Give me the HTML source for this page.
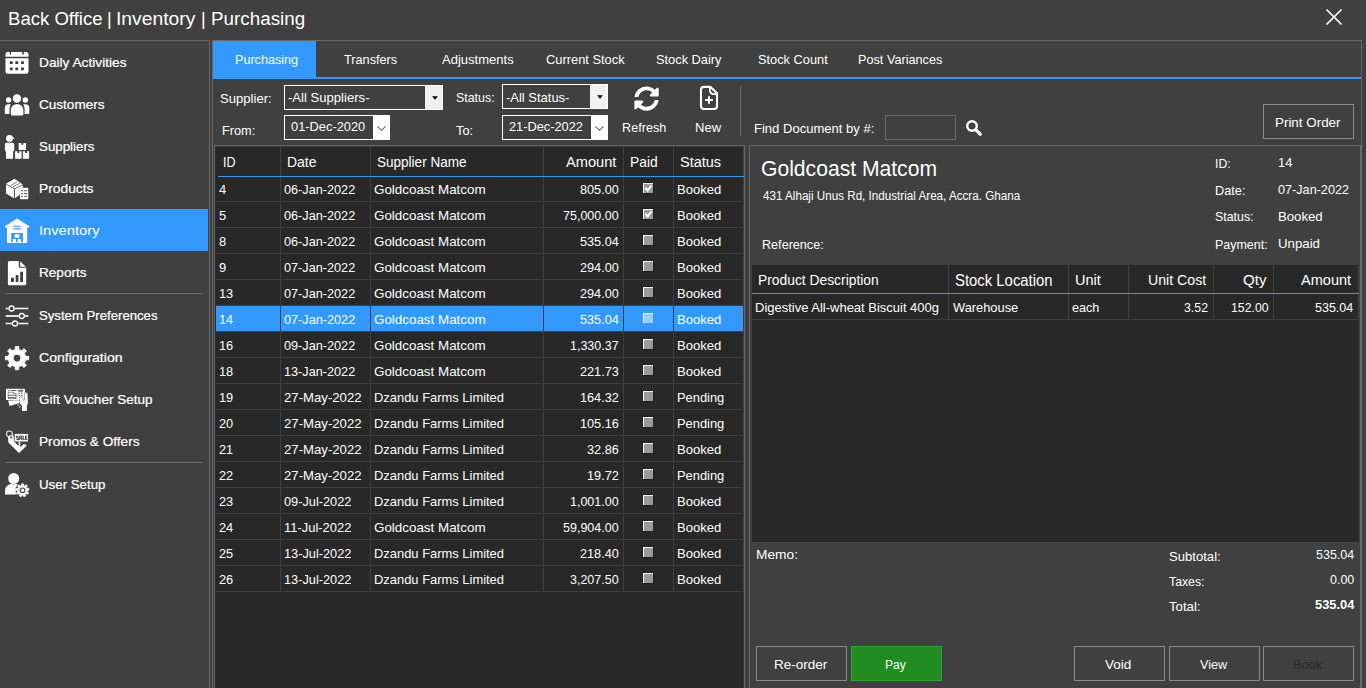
<!DOCTYPE html><html><head><meta charset="utf-8"><title>Back Office</title><style>
html,body{margin:0;padding:0;}
body{width:1366px;height:688px;overflow:hidden;background:#404040;position:relative;font-family:"Liberation Sans",sans-serif;}
.b{position:absolute;}
.t{position:absolute;white-space:pre;line-height:1;transform-origin:0 0;}
svg{position:absolute;overflow:visible;}
</style></head><body>
<svg style="left:1325px;top:8px" width="18" height="18" viewBox="0 0 18 18"><path d="M1.5 1.5 L16.5 16.5 M16.5 1.5 L1.5 16.5" stroke="#fff" stroke-width="1.75" fill="none"/></svg>
<div class="b" style="left:0px;top:40px;width:210px;height:1px;background:#686868;"></div>
<div class="b" style="left:209px;top:40px;width:1px;height:648px;background:#686868;"></div>
<div class="b" style="left:0px;top:209px;width:208px;height:42px;background:#3399ff;"></div>
<div class="b" style="left:5px;top:293px;width:198px;height:1px;background:#6e6e6e;"></div>
<div class="b" style="left:5px;top:462px;width:198px;height:1px;background:#6e6e6e;"></div>
<div class="b" style="left:212px;top:40px;width:1150px;height:1px;background:#686868;"></div>
<div class="b" style="left:212px;top:40px;width:1px;height:648px;background:#686868;"></div>
<div class="b" style="left:1361px;top:40px;width:1px;height:648px;background:#686868;"></div>
<div class="b" style="left:213px;top:41px;width:103px;height:38px;background:#3399ff;"></div>
<div class="b" style="left:213px;top:77px;width:1148px;height:2px;background:#3399ff;"></div>
<div class="b" style="left:284px;top:85px;width:159px;height:25px;border:1px solid #fff;box-sizing:border-box;"></div>
<div class="b" style="left:425px;top:86px;width:17px;height:23px;background:#f0f0f0;"></div>
<svg style="left:431.6px;top:95.8px" width="6" height="4" viewBox="0 0 6 4"><path d="M0.1 0.2 L5.9 0.2 L3 3.7 Z" fill="#000"/></svg>
<div class="b" style="left:502px;top:84px;width:106px;height:25px;border:1px solid #fff;box-sizing:border-box;"></div>
<div class="b" style="left:590px;top:85px;width:17px;height:23px;background:#f0f0f0;"></div>
<svg style="left:596.6px;top:94.8px" width="6" height="4" viewBox="0 0 6 4"><path d="M0.1 0.2 L5.9 0.2 L3 3.7 Z" fill="#000"/></svg>
<div class="b" style="left:284px;top:115px;width:106px;height:25px;border:1px solid #fff;box-sizing:border-box;"></div>
<div class="b" style="left:373px;top:116px;width:16px;height:23px;background:#fff;"></div>
<svg style="left:377.0px;top:125.5px" width="9" height="5" viewBox="0 0 9 5"><path d="M0.4 0.4 L4.5 4.3 L8.6 0.4" stroke="#5c5c5c" stroke-width="1.1" fill="none"/></svg>
<div class="b" style="left:502px;top:115px;width:106px;height:25px;border:1px solid #fff;box-sizing:border-box;"></div>
<div class="b" style="left:591px;top:116px;width:16px;height:23px;background:#fff;"></div>
<svg style="left:595.0px;top:125.5px" width="9" height="5" viewBox="0 0 9 5"><path d="M0.4 0.4 L4.5 4.3 L8.6 0.4" stroke="#5c5c5c" stroke-width="1.1" fill="none"/></svg>
<div class="b" style="left:740px;top:86px;width:1px;height:50px;background:#6a6a6a;"></div>
<div class="b" style="left:885px;top:115px;width:71px;height:25px;border:1px solid #6a6a6a;box-sizing:border-box;"></div>
<div class="b" style="left:1263px;top:104px;width:91px;height:35px;border:1px solid #8a8a8a;box-sizing:border-box;"></div>
<div class="b" style="left:214px;top:145px;width:531px;height:560px;background:#282828;border:1px solid #686868;box-sizing:border-box;"></div>
<div class="b" style="left:215px;top:146px;width:529px;height:1px;background:#363636;"></div>
<div class="b" style="left:743px;top:146px;width:1px;height:542px;background:#363636;"></div>
<div class="b" style="left:216px;top:201px;width:528px;height:1px;background:#404040;"></div>
<div class="b" style="left:216px;top:227px;width:528px;height:1px;background:#404040;"></div>
<div class="b" style="left:216px;top:253px;width:528px;height:1px;background:#404040;"></div>
<div class="b" style="left:216px;top:279px;width:528px;height:1px;background:#404040;"></div>
<div class="b" style="left:216px;top:305px;width:528px;height:1px;background:#404040;"></div>
<div class="b" style="left:216px;top:331px;width:528px;height:1px;background:#404040;"></div>
<div class="b" style="left:216px;top:357px;width:528px;height:1px;background:#404040;"></div>
<div class="b" style="left:216px;top:383px;width:528px;height:1px;background:#404040;"></div>
<div class="b" style="left:216px;top:409px;width:528px;height:1px;background:#404040;"></div>
<div class="b" style="left:216px;top:435px;width:528px;height:1px;background:#404040;"></div>
<div class="b" style="left:216px;top:461px;width:528px;height:1px;background:#404040;"></div>
<div class="b" style="left:216px;top:487px;width:528px;height:1px;background:#404040;"></div>
<div class="b" style="left:216px;top:513px;width:528px;height:1px;background:#404040;"></div>
<div class="b" style="left:216px;top:539px;width:528px;height:1px;background:#404040;"></div>
<div class="b" style="left:216px;top:565px;width:528px;height:1px;background:#404040;"></div>
<div class="b" style="left:216px;top:591px;width:528px;height:1px;background:#404040;"></div>
<div class="b" style="left:216px;top:306px;width:528px;height:25px;background:#3399ff;"></div>
<div class="b" style="left:280px;top:146px;width:1px;height:446px;background:#404040;"></div>
<div class="b" style="left:370px;top:146px;width:1px;height:446px;background:#404040;"></div>
<div class="b" style="left:543px;top:146px;width:1px;height:446px;background:#404040;"></div>
<div class="b" style="left:623px;top:146px;width:1px;height:446px;background:#404040;"></div>
<div class="b" style="left:673px;top:146px;width:1px;height:446px;background:#404040;"></div>
<div class="b" style="left:743px;top:146px;width:1px;height:446px;background:#404040;"></div>
<div class="b" style="left:218px;top:176px;width:526px;height:1px;background:#3399ff;"></div>
<div class="b" style="left:643px;top:183px;width:10px;height:10px;background:#9a9a9a;box-sizing:border-box;border-top:1px solid #fff;border-left:1px solid #fff;box-shadow:0 0 0 1px #1f1f1f;"></div>
<svg style="left:643px;top:183px" width="10" height="10" viewBox="0 0 10 10"><path d="M2.4 4.6 L4.6 7.6 L8.6 2.2" stroke="#fff" stroke-width="1.9" fill="none"/></svg>
<div class="b" style="left:643px;top:209px;width:10px;height:10px;background:#9a9a9a;box-sizing:border-box;border-top:1px solid #fff;border-left:1px solid #fff;box-shadow:0 0 0 1px #1f1f1f;"></div>
<svg style="left:643px;top:209px" width="10" height="10" viewBox="0 0 10 10"><path d="M2.4 4.6 L4.6 7.6 L8.6 2.2" stroke="#fff" stroke-width="1.9" fill="none"/></svg>
<div class="b" style="left:643px;top:235px;width:10px;height:10px;background:#9a9a9a;box-sizing:border-box;border-top:1px solid #fff;border-left:1px solid #fff;box-shadow:0 0 0 1px #1f1f1f;"></div>
<div class="b" style="left:643px;top:261px;width:10px;height:10px;background:#9a9a9a;box-sizing:border-box;border-top:1px solid #fff;border-left:1px solid #fff;box-shadow:0 0 0 1px #1f1f1f;"></div>
<div class="b" style="left:643px;top:287px;width:10px;height:10px;background:#9a9a9a;box-sizing:border-box;border-top:1px solid #fff;border-left:1px solid #fff;box-shadow:0 0 0 1px #1f1f1f;"></div>
<div class="b" style="left:643px;top:313px;width:10px;height:10px;background:#9ccdff;box-sizing:border-box;border-top:1px solid #fff;border-left:1px solid #fff;box-shadow:0 0 0 1px #3399ff;"></div>
<div class="b" style="left:643px;top:339px;width:10px;height:10px;background:#9a9a9a;box-sizing:border-box;border-top:1px solid #fff;border-left:1px solid #fff;box-shadow:0 0 0 1px #1f1f1f;"></div>
<div class="b" style="left:643px;top:365px;width:10px;height:10px;background:#9a9a9a;box-sizing:border-box;border-top:1px solid #fff;border-left:1px solid #fff;box-shadow:0 0 0 1px #1f1f1f;"></div>
<div class="b" style="left:643px;top:391px;width:10px;height:10px;background:#9a9a9a;box-sizing:border-box;border-top:1px solid #fff;border-left:1px solid #fff;box-shadow:0 0 0 1px #1f1f1f;"></div>
<div class="b" style="left:643px;top:417px;width:10px;height:10px;background:#9a9a9a;box-sizing:border-box;border-top:1px solid #fff;border-left:1px solid #fff;box-shadow:0 0 0 1px #1f1f1f;"></div>
<div class="b" style="left:643px;top:443px;width:10px;height:10px;background:#9a9a9a;box-sizing:border-box;border-top:1px solid #fff;border-left:1px solid #fff;box-shadow:0 0 0 1px #1f1f1f;"></div>
<div class="b" style="left:643px;top:469px;width:10px;height:10px;background:#9a9a9a;box-sizing:border-box;border-top:1px solid #fff;border-left:1px solid #fff;box-shadow:0 0 0 1px #1f1f1f;"></div>
<div class="b" style="left:643px;top:495px;width:10px;height:10px;background:#9a9a9a;box-sizing:border-box;border-top:1px solid #fff;border-left:1px solid #fff;box-shadow:0 0 0 1px #1f1f1f;"></div>
<div class="b" style="left:643px;top:521px;width:10px;height:10px;background:#9a9a9a;box-sizing:border-box;border-top:1px solid #fff;border-left:1px solid #fff;box-shadow:0 0 0 1px #1f1f1f;"></div>
<div class="b" style="left:643px;top:547px;width:10px;height:10px;background:#9a9a9a;box-sizing:border-box;border-top:1px solid #fff;border-left:1px solid #fff;box-shadow:0 0 0 1px #1f1f1f;"></div>
<div class="b" style="left:643px;top:573px;width:10px;height:10px;background:#9a9a9a;box-sizing:border-box;border-top:1px solid #fff;border-left:1px solid #fff;box-shadow:0 0 0 1px #1f1f1f;"></div>
<div class="b" style="left:749px;top:145px;width:612px;height:560px;border:1px solid #686868;box-sizing:border-box;"></div>
<div class="b" style="left:752px;top:265px;width:607px;height:277px;background:#282828;"></div>
<div class="b" style="left:948px;top:265px;width:1px;height:55px;background:#404040;"></div>
<div class="b" style="left:1068px;top:265px;width:1px;height:55px;background:#404040;"></div>
<div class="b" style="left:1128px;top:265px;width:1px;height:55px;background:#404040;"></div>
<div class="b" style="left:1213px;top:265px;width:1px;height:55px;background:#404040;"></div>
<div class="b" style="left:1273px;top:265px;width:1px;height:55px;background:#404040;"></div>
<div class="b" style="left:1358px;top:265px;width:1px;height:55px;background:#404040;"></div>
<div class="b" style="left:752px;top:319px;width:607px;height:1px;background:#404040;"></div>
<div class="b" style="left:752px;top:293px;width:607px;height:1px;background:#3399ff;"></div>
<div class="b" style="left:756px;top:646px;width:91px;height:35px;border:1px solid #8a8a8a;box-sizing:border-box;"></div>
<div class="b" style="left:851px;top:646px;width:91px;height:35px;background:#228b22;border:1px solid #2fa52f;box-sizing:border-box;"></div>
<div class="b" style="left:1074px;top:646px;width:91px;height:35px;border:1px solid #8a8a8a;box-sizing:border-box;"></div>
<div class="b" style="left:1169px;top:646px;width:91px;height:35px;border:1px solid #8a8a8a;box-sizing:border-box;"></div>
<div class="b" style="left:1263px;top:646px;width:91px;height:35px;border:1px solid #8a8a8a;box-sizing:border-box;"></div>
<svg style="left:633.85px;top:85.75px" width="25.1" height="25.1" viewBox="0 0 512 512"><path fill="#fff" d="M370.72 133.28C339.458 104.008 298.888 87.962 255.848 88c-77.458.068-144.328 53.178-162.791 126.85-1.344 5.363-6.122 9.15-11.651 9.15H24.103c-7.498 0-13.194-6.807-11.807-14.176C33.933 94.924 134.813 8 256 8c66.448 0 126.791 26.136 171.315 68.685L463.03 40.97C478.149 25.851 504 36.559 504 57.941V192c0 13.255-10.745 24-24 24H345.941c-21.382 0-32.09-25.851-16.971-40.971l41.75-41.749zM32 296h134.059c21.382 0 32.09 25.851 16.971 40.971l-41.75 41.75c31.262 29.273 71.835 45.319 114.876 45.28 77.418-.07 144.315-53.144 162.787-126.849 1.344-5.363 6.122-9.15 11.651-9.15h57.304c7.498 0 13.194 6.807 11.807 14.176C478.067 417.076 377.187 504 256 504c-66.448 0-126.791-26.136-171.315-68.685L48.97 471.03C33.851 486.149 8 475.441 8 454.059V320c0-13.255 10.745-24 24-24z"/></svg>
<svg style="left:0;top:0" width="1366" height="688" viewBox="0 0 1366 688"><path fill="#fff" d="M8 52h1.7v2.6h1.3V52h11.2v2.6h1.6V52H26a2.5 2.5 0 0 1 2.5 2.5v2.2h-23v-2.2A2.5 2.5 0 0 1 8 52z"/><path fill="#fff" fill-rule="evenodd" d="M5.5 58.3h23v12.9a2.5 2.5 0 0 1-2.5 2.5H8a2.5 2.5 0 0 1-2.5-2.5zM9.8 61.2h2.9v2.9H9.8z M15.3 61.2h2.9v2.9h-2.9z M21 61.2h2.9v2.9H21z M9.8 67.4h2.9v2.9H9.8z M15.3 67.4h2.9v2.9h-2.9z M21 67.4h2.9v2.9H21z"/><circle cx="17" cy="98.5" r="4.2" fill="#fff"/><circle cx="8.6" cy="100" r="2.7" fill="#fff"/><circle cx="25.3" cy="100" r="2.7" fill="#fff"/><path fill="#fff" d="M10.8 110a6.2 6 0 0 1 12.6 0v4a1.5 1.5 0 0 1-1.5 1.5h-9.6a1.5 1.5 0 0 1-1.5-1.5z"/><path fill="#fff" d="M4.8 108a3.8 3.8 0 0 1 3.8-3.8h2.3a7 7 0 0 0-1.4 4.5v5.2H5.8a1 1 0 0 1-1-1z"/><path fill="#fff" d="M29.3 108a3.8 3.8 0 0 0-3.8-3.8h-2.3a7 7 0 0 1 1.4 4.5v5.2h3.7a1 1 0 0 0 1-1z"/><circle cx="9.5" cy="138.4" r="3.4" fill="#fff"/><path fill="#fff" d="M11.5 136.6l3.2 1.6-2.2 1z"/><path fill="#fff" d="M6.5 142.8h6.2a1.5 1.5 0 0 1 1.5 1.5v6.2a.8.8 0 0 1-.8.8h-.3v7.5H6v-7.5h-.3a.8.8 0 0 1-.8-.8v-6.2a1.5 1.5 0 0 1 1.6-1.5z"/><path fill="#fff" d="M18.6 143.1h2.7v1.7h2v-1.7h2.7v6.8h-7.4z M15.1 151.2h2.3v1.7h1.9v-1.7h2.3v7.6h-6.5z M22.9 151.2h2.2v1.7h1.9v-1.7h2.1v7.6h-6.2z"/><path fill="#fff" d="M14.6 178.8l-8.6 5 8.4 4.7 8.4-4z"/><path fill="#fff" d="M6 184.6l8 4.5v9.1l-8-4.7z"/><path fill="#fff" d="M14.9 189.1l7.9-3.9v3h-3v6.6l-4.9 3.4z"/><path stroke="#404040" stroke-width="0.7" fill="none" d="M10.5 185.9l6.8-4.2 M12.8 187.2l7.3-4.2"/><rect x="20" y="187.8" width="8.3" height="11.4" rx="0.8" fill="#fff"/><path stroke="#666" stroke-width="1.1" fill="none" d="M21 190.7h2 M24 190.7h3.3 M21 193.6h2 M24 193.6h3.3 M21 196.5h2 M24 196.5h3.3"/><path fill="#fff" d="M17 218.6l12.2 7.7v1.5l-2-.6v14.6a1.2 1.2 0 0 1-1.2 1.2H8.2A1.2 1.2 0 0 1 7 241.8v-14.6l-2 .6v-1.5z"/><path fill="#3399ff" d="M13.1 225.8h7.8v0.9h-7.8z"/><path fill="#7dbdff" d="M13.1 228.1h7.8v1.7h-7.8z"/><path fill="#3399ff" d="M11.2 233h11.8v9.2H11.2z"/><path fill="#fff" d="M14.7 234.2h4.7v3.5h-4.7z M12.8 239h3.2v3.3h-3.2z M17.7 239h3.4v3.3h-3.4z"/><path fill="#fff" d="M9.4 261h9.4v5.4a1.3 1.3 0 0 0 1.3 1.3h6.1v16a1.5 1.5 0 0 1-1.5 1.5H9.4a1.5 1.5 0 0 1-1.5-1.5v-21.2a1.5 1.5 0 0 1 1.5-1.5z"/><path fill="#fff" d="M20.1 261.3l5.8 5.4h-5.8z"/><path fill="#404040" d="M11 277.8h2.9v4.2H11z M15.7 274.9h2.7v7.1h-2.7z M20.2 271.7h2.8v10.3h-2.8z"/><path stroke="#fff" stroke-width="1.3" fill="none" d="M5.8 308.5h2.8 M14.7 308.5h13.6 M5.8 323.5h6.2 M18.1 323.5h10.2"/><path stroke="#e4e4e4" stroke-width="1.9" fill="none" d="M5.8 316h12.9 M24.9 316h3.4"/><circle cx="11.6" cy="308.5" r="2.5" stroke="#fff" stroke-width="1.3" fill="none"/><circle cx="21.8" cy="316" r="2.5" stroke="#fff" stroke-width="1.3" fill="none"/><circle cx="15" cy="323.5" r="2.5" stroke="#fff" stroke-width="1.3" fill="none"/><path fill="#fff" stroke="#fff" stroke-width="0.8" stroke-linejoin="round" d="M13.79 349.91 L15.25 349.48 L15.27 346.43 L18.73 346.43 L18.75 349.48 L20.53 350.04 L21.86 350.76 L24.03 348.62 L26.48 351.07 L24.34 353.24 L25.19 354.89 L25.62 356.35 L28.67 356.37 L28.67 359.83 L25.62 359.85 L25.06 361.63 L24.34 362.96 L26.48 365.13 L24.03 367.58 L21.86 365.44 L20.21 366.29 L18.75 366.72 L18.73 369.77 L15.27 369.77 L15.25 366.72 L13.47 366.16 L12.14 365.44 L9.97 367.58 L7.52 365.13 L9.66 362.96 L8.81 361.31 L8.38 359.85 L5.33 359.83 L5.33 356.37 L8.38 356.35 L8.94 354.57 L9.66 353.24 L7.52 351.07 L9.97 348.62 L12.14 350.76Z"/><circle cx="17" cy="358.1" r="3.4" fill="#404040"/><path fill="#fff" d="M8.2 400.6l11.5-.4.5 2.6-10.6 3.3z"/><rect x="6" y="388.8" width="18.9" height="11.2" rx="0.6" fill="#fff"/><path stroke="#555" stroke-width="0.9" fill="none" d="M7.8 390.5h1.8 M11 390.5h5.6 M8.4 395.3h7.6 M8.4 397.6h7.6 M18.3 393.2h1.6 M20.6 393.2h2.2 M18.3 395.6h1.6 M20.9 395.6h1.9"/><path fill="#6a6a6a" d="M18.2 389.8h4.8v1.9h-4.8z"/><path stroke="#555" stroke-width="0.7" fill="none" d="M8.2 392.2h5.4v1.4h2.6v5h-8z"/><path fill="#fff" stroke="#404040" stroke-width="0.8" paint-order="stroke" d="M24.5 394.2q.2-1.6 1.5-1.6 1.4 0 1.5 1.5l.4 8.8-1 3v5h-4.9v-4.8l-2.3-3.2-.3-4.2q-.1-1.5 1-1.7 1-.1 1.6.9l1.7 2.7.9-.3z"/><path stroke="#fff" stroke-width="1" fill="none" d="M17.3 405.4l1.8-.9 M18.9 407.5l1.7-1.2"/><circle cx="9.4" cy="433.9" r="2.9" stroke="#e8e8e8" stroke-width="1.1" fill="none"/><path fill="#fff" d="M9.6 435.6l3.6-1.2 1.2 7.3 4.2 4.2v-4.1h1.7v5.7l3.7-3.7 2.8 1.6-7.8 7.6-10.6-10.5-.4-5z"/><circle cx="11.2" cy="437.4" r="1.1" fill="#404040"/><circle cx="11.2" cy="437.4" r="0.4" fill="#fff"/><rect x="14.7" y="433.9" width="13.3" height="7.6" fill="#fff" stroke="#404040" stroke-width="0.9" paint-order="stroke"/><path stroke="#2e2e2e" stroke-width="0.95" fill="none" d="M18.5 436.1h-2.1v1.7h2.1v1.8h-2.1 M19.7 440v-3.9h2.1v3.9 M19.7 438.2h2.1 M23.1 435.7v3.9h1.6 M27.4 436.1h-1.9v3.5h1.9 M25.5 437.85h1.5"/><circle cx="13.7" cy="478.5" r="5.5" fill="#fff"/><path fill="#fff" d="M5 494.5v-4a6.5 6.5 0 0 1 6.5-6.5h.6a7 7 0 0 0 3.4 0h1.3l.9.6-2.2 3.3.7 2.2-.7 2.2 1.3 2.2z"/><circle cx="22.5" cy="490.3" r="6.6" fill="#404040"/><path fill="#fff" stroke="#fff" stroke-width="0.8" stroke-linejoin="round" d="M20.97 485.86 L21.50 485.71 L21.48 483.88 L23.52 483.88 L23.50 485.71 L24.18 485.91 L24.69 486.14 L25.85 484.73 L27.41 486.04 L26.22 487.42 L26.61 488.02 L26.85 488.52 L28.65 488.18 L29.00 490.19 L27.20 490.48 L27.11 491.20 L26.98 491.73 L28.57 492.63 L27.55 494.39 L25.98 493.46 L25.46 493.95 L25.01 494.28 L25.65 495.99 L23.74 496.68 L23.13 494.96 L22.42 495.00 L21.87 494.96 L21.26 496.68 L19.35 495.99 L19.99 494.28 L19.42 493.85 L19.02 493.46 L17.45 494.39 L16.43 492.63 L18.02 491.73 L17.86 491.04 L17.80 490.48 L16.00 490.19 L16.35 488.18 L18.15 488.52 L18.47 487.88 L18.78 487.42 L17.59 486.04 L19.15 484.73 L20.31 486.14Z"/><circle cx="22.5" cy="490.3" r="2.9" fill="#404040"/><circle cx="22.5" cy="490.3" r="1.7" fill="#fff"/><path stroke="#fff" stroke-width="2.1" fill="none" stroke-linejoin="round" d="M704 86.9h6.6l6.4 6.4v12.7a3 3 0 0 1-3 3h-10a3 3 0 0 1-3-3V89.9a3 3 0 0 1 3-3z"/><path stroke="#fff" stroke-width="1.8" fill="none" d="M709.9 87.2v3.4a3.6 3.6 0 0 0 3.6 3.6h3.3"/><path stroke="#fff" stroke-width="2" fill="none" d="M705.2 100h7.7 M709 96.2v7.6"/><circle cx="972" cy="126" r="4.75" stroke="#fff" stroke-width="2.45" fill="none"/><path stroke="#fff" stroke-width="3.3" stroke-linecap="round" fill="none" d="M975.7 129.7l4.5 4.5"/></svg>
<span class="t" style="left:7.50px;top:9.76px;font-size:18px;color:#ffffff;transform:scaleX(1.0314);">Back Office</span>
<span class="t" style="left:106.90px;top:9.76px;font-size:18px;color:#ffffff;">|</span>
<span class="t" style="left:116.30px;top:9.76px;font-size:18px;color:#ffffff;transform:scaleX(1.0723);">Inventory</span>
<span class="t" style="left:201.10px;top:9.76px;font-size:18px;color:#ffffff;">|</span>
<span class="t" style="left:210.50px;top:9.76px;font-size:18px;color:#ffffff;transform:scaleX(1.0459);">Purchasing</span>
<span class="t" style="left:39.00px;top:56.00px;font-size:13px;color:#ffffff;-webkit-text-stroke:0.22px #ffffff;transform:scaleX(1.0532);">Daily Activities</span>
<span class="t" style="left:39.00px;top:98.00px;font-size:13px;color:#ffffff;-webkit-text-stroke:0.22px #ffffff;transform:scaleX(1.0420);">Customers</span>
<span class="t" style="left:39.00px;top:140.00px;font-size:13px;color:#ffffff;-webkit-text-stroke:0.22px #ffffff;transform:scaleX(1.0239);">Suppliers</span>
<span class="t" style="left:39.00px;top:182.00px;font-size:13px;color:#ffffff;-webkit-text-stroke:0.22px #ffffff;transform:scaleX(1.0621);">Products</span>
<span class="t" style="left:39.00px;top:224.00px;font-size:13px;color:#ffffff;transform:scaleX(1.1312);">Inventory</span>
<span class="t" style="left:39.00px;top:266.00px;font-size:13px;color:#ffffff;-webkit-text-stroke:0.22px #ffffff;transform:scaleX(1.0432);">Reports</span>
<span class="t" style="left:39.00px;top:309.00px;font-size:13px;color:#ffffff;-webkit-text-stroke:0.22px #ffffff;transform:scaleX(1.0124);">System Preferences</span>
<span class="t" style="left:39.00px;top:351.00px;font-size:13px;color:#ffffff;-webkit-text-stroke:0.22px #ffffff;transform:scaleX(1.0798);">Configuration</span>
<span class="t" style="left:39.00px;top:393.00px;font-size:13px;color:#ffffff;-webkit-text-stroke:0.22px #ffffff;transform:scaleX(1.0401);">Gift Voucher Setup</span>
<span class="t" style="left:39.00px;top:435.00px;font-size:13px;color:#ffffff;-webkit-text-stroke:0.22px #ffffff;transform:scaleX(1.0486);">Promos &amp; Offers</span>
<span class="t" style="left:39.00px;top:478.00px;font-size:13px;color:#ffffff;-webkit-text-stroke:0.22px #ffffff;transform:scaleX(1.0223);">User Setup</span>
<span class="t" style="left:235.00px;top:53.00px;font-size:13px;color:#ffffff;transform:scaleX(0.9685);">Purchasing</span>
<span class="t" style="left:343.80px;top:53.00px;font-size:13px;color:#ffffff;transform:scaleX(0.9775);">Transfers</span>
<span class="t" style="left:441.50px;top:53.00px;font-size:13px;color:#ffffff;transform:scaleX(1.0021);">Adjustments</span>
<span class="t" style="left:546.20px;top:53.00px;font-size:13px;color:#ffffff;transform:scaleX(0.9889);">Current Stock</span>
<span class="t" style="left:655.80px;top:53.00px;font-size:13px;color:#ffffff;transform:scaleX(0.9854);">Stock Dairy</span>
<span class="t" style="left:757.80px;top:53.00px;font-size:13px;color:#ffffff;transform:scaleX(0.9841);">Stock Count</span>
<span class="t" style="left:857.90px;top:53.00px;font-size:13px;color:#ffffff;transform:scaleX(0.9749);">Post Variances</span>
<span class="t" style="left:219.80px;top:92.00px;font-size:13px;color:#ffffff;transform:scaleX(1.0076);">Supplier:</span>
<span class="t" style="left:222.00px;top:123.50px;font-size:13px;color:#ffffff;transform:scaleX(0.9778);">From:</span>
<span class="t" style="left:455.70px;top:91.00px;font-size:13px;color:#ffffff;transform:scaleX(0.9538);">Status:</span>
<span class="t" style="left:456.20px;top:123.50px;font-size:13px;color:#ffffff;transform:scaleX(0.9859);">To:</span>
<span class="t" style="left:287.50px;top:91.00px;font-size:13px;color:#ffffff;transform:scaleX(1.0071);">-All Suppliers-</span>
<span class="t" style="left:506.30px;top:91.00px;font-size:13px;color:#ffffff;transform:scaleX(0.9972);">-All Status-</span>
<span class="t" style="left:290.90px;top:120.00px;font-size:13px;color:#ffffff;transform:scaleX(0.9873);">01-Dec-2020</span>
<span class="t" style="left:508.90px;top:120.00px;font-size:13px;color:#ffffff;transform:scaleX(0.9833);">21-Dec-2022</span>
<span class="t" style="left:622.00px;top:121.00px;font-size:13px;color:#ffffff;transform:scaleX(0.9730);">Refresh</span>
<span class="t" style="left:694.50px;top:121.00px;font-size:13px;color:#ffffff;transform:scaleX(1.0032);">New</span>
<span class="t" style="left:754.10px;top:121.50px;font-size:13px;color:#ffffff;transform:scaleX(1.0029);">Find Document by #:</span>
<span class="t" style="left:1274.50px;top:116.00px;font-size:13px;color:#ffffff;transform:scaleX(1.0302);">Print Order</span>
<span class="t" style="left:222.50px;top:155.15px;font-size:14px;color:#ffffff;transform:scaleX(0.8929);">ID</span>
<span class="t" style="left:287.00px;top:155.15px;font-size:14px;color:#ffffff;transform:scaleX(0.9974);">Date</span>
<span class="t" style="left:377.00px;top:155.15px;font-size:14px;color:#ffffff;transform:scaleX(0.9664);">Supplier Name</span>
<span class="t" style="left:565.80px;top:155.15px;font-size:14px;color:#ffffff;transform:scaleX(1.0446);">Amount</span>
<span class="t" style="left:630.30px;top:155.15px;font-size:14px;color:#ffffff;transform:scaleX(0.9882);">Paid</span>
<span class="t" style="left:679.70px;top:155.15px;font-size:14px;color:#ffffff;transform:scaleX(1.0352);">Status</span>
<span class="t" style="left:218.50px;top:183.00px;font-size:13px;color:#ffffff;transform:scaleX(0.9952);">4</span>
<span class="t" style="left:283.80px;top:183.00px;font-size:13px;color:#ffffff;transform:scaleX(0.9753);">06-Jan-2022</span>
<span class="t" style="left:373.70px;top:183.00px;font-size:13px;color:#ffffff;transform:scaleX(1.0298);">Goldcoast Matcom</span>
<span class="t" style="left:579.58px;top:183.00px;font-size:13px;color:#ffffff;transform:scaleX(0.9762);">805.00</span>
<span class="t" style="left:677.00px;top:183.00px;font-size:13px;color:#ffffff;transform:scaleX(1.0069);">Booked</span>
<span class="t" style="left:218.50px;top:209.00px;font-size:13px;color:#ffffff;transform:scaleX(0.9952);">5</span>
<span class="t" style="left:283.80px;top:209.00px;font-size:13px;color:#ffffff;transform:scaleX(0.9753);">06-Jan-2022</span>
<span class="t" style="left:373.70px;top:209.00px;font-size:13px;color:#ffffff;transform:scaleX(1.0298);">Goldcoast Matcom</span>
<span class="t" style="left:562.76px;top:209.00px;font-size:13px;color:#ffffff;transform:scaleX(0.9619);">75,000.00</span>
<span class="t" style="left:677.00px;top:209.00px;font-size:13px;color:#ffffff;transform:scaleX(1.0069);">Booked</span>
<span class="t" style="left:218.50px;top:235.00px;font-size:13px;color:#ffffff;transform:scaleX(0.9952);">8</span>
<span class="t" style="left:283.80px;top:235.00px;font-size:13px;color:#ffffff;transform:scaleX(0.9753);">06-Jan-2022</span>
<span class="t" style="left:373.70px;top:235.00px;font-size:13px;color:#ffffff;transform:scaleX(1.0298);">Goldcoast Matcom</span>
<span class="t" style="left:579.58px;top:235.00px;font-size:13px;color:#ffffff;transform:scaleX(0.9762);">535.04</span>
<span class="t" style="left:677.00px;top:235.00px;font-size:13px;color:#ffffff;transform:scaleX(1.0069);">Booked</span>
<span class="t" style="left:218.50px;top:261.00px;font-size:13px;color:#ffffff;transform:scaleX(0.9952);">9</span>
<span class="t" style="left:283.80px;top:261.00px;font-size:13px;color:#ffffff;transform:scaleX(0.9753);">07-Jan-2022</span>
<span class="t" style="left:373.70px;top:261.00px;font-size:13px;color:#ffffff;transform:scaleX(1.0298);">Goldcoast Matcom</span>
<span class="t" style="left:579.58px;top:261.00px;font-size:13px;color:#ffffff;transform:scaleX(0.9762);">294.00</span>
<span class="t" style="left:677.00px;top:261.00px;font-size:13px;color:#ffffff;transform:scaleX(1.0069);">Booked</span>
<span class="t" style="left:218.50px;top:287.00px;font-size:13px;color:#ffffff;transform:scaleX(0.9814);">13</span>
<span class="t" style="left:283.80px;top:287.00px;font-size:13px;color:#ffffff;transform:scaleX(0.9753);">07-Jan-2022</span>
<span class="t" style="left:373.70px;top:287.00px;font-size:13px;color:#ffffff;transform:scaleX(1.0298);">Goldcoast Matcom</span>
<span class="t" style="left:579.58px;top:287.00px;font-size:13px;color:#ffffff;transform:scaleX(0.9762);">294.00</span>
<span class="t" style="left:677.00px;top:287.00px;font-size:13px;color:#ffffff;transform:scaleX(1.0069);">Booked</span>
<span class="t" style="left:218.50px;top:313.00px;font-size:13px;color:#ffffff;transform:scaleX(0.9814);">14</span>
<span class="t" style="left:283.80px;top:313.00px;font-size:13px;color:#ffffff;transform:scaleX(0.9753);">07-Jan-2022</span>
<span class="t" style="left:373.70px;top:313.00px;font-size:13px;color:#ffffff;transform:scaleX(1.0298);">Goldcoast Matcom</span>
<span class="t" style="left:579.58px;top:313.00px;font-size:13px;color:#ffffff;transform:scaleX(0.9762);">535.04</span>
<span class="t" style="left:677.00px;top:313.00px;font-size:13px;color:#ffffff;transform:scaleX(1.0069);">Booked</span>
<span class="t" style="left:218.50px;top:339.00px;font-size:13px;color:#ffffff;transform:scaleX(0.9814);">16</span>
<span class="t" style="left:283.80px;top:339.00px;font-size:13px;color:#ffffff;transform:scaleX(0.9753);">09-Jan-2022</span>
<span class="t" style="left:373.70px;top:339.00px;font-size:13px;color:#ffffff;transform:scaleX(1.0298);">Goldcoast Matcom</span>
<span class="t" style="left:569.76px;top:339.00px;font-size:13px;color:#ffffff;transform:scaleX(0.9611);">1,330.37</span>
<span class="t" style="left:677.00px;top:339.00px;font-size:13px;color:#ffffff;transform:scaleX(1.0069);">Booked</span>
<span class="t" style="left:218.50px;top:365.00px;font-size:13px;color:#ffffff;transform:scaleX(0.9814);">18</span>
<span class="t" style="left:283.80px;top:365.00px;font-size:13px;color:#ffffff;transform:scaleX(0.9753);">13-Jan-2022</span>
<span class="t" style="left:373.70px;top:365.00px;font-size:13px;color:#ffffff;transform:scaleX(1.0298);">Goldcoast Matcom</span>
<span class="t" style="left:579.58px;top:365.00px;font-size:13px;color:#ffffff;transform:scaleX(0.9762);">221.73</span>
<span class="t" style="left:677.00px;top:365.00px;font-size:13px;color:#ffffff;transform:scaleX(1.0069);">Booked</span>
<span class="t" style="left:218.50px;top:391.00px;font-size:13px;color:#ffffff;transform:scaleX(0.9814);">19</span>
<span class="t" style="left:283.80px;top:391.00px;font-size:13px;color:#ffffff;transform:scaleX(1.0129);">27-May-2022</span>
<span class="t" style="left:373.70px;top:391.00px;font-size:13px;color:#ffffff;transform:scaleX(0.9940);">Dzandu Farms Limited</span>
<span class="t" style="left:579.58px;top:391.00px;font-size:13px;color:#ffffff;transform:scaleX(0.9762);">164.32</span>
<span class="t" style="left:677.00px;top:391.00px;font-size:13px;color:#ffffff;transform:scaleX(0.9912);">Pending</span>
<span class="t" style="left:218.50px;top:417.00px;font-size:13px;color:#ffffff;transform:scaleX(0.9814);">20</span>
<span class="t" style="left:283.80px;top:417.00px;font-size:13px;color:#ffffff;transform:scaleX(1.0129);">27-May-2022</span>
<span class="t" style="left:373.70px;top:417.00px;font-size:13px;color:#ffffff;transform:scaleX(0.9940);">Dzandu Farms Limited</span>
<span class="t" style="left:579.58px;top:417.00px;font-size:13px;color:#ffffff;transform:scaleX(0.9762);">105.16</span>
<span class="t" style="left:677.00px;top:417.00px;font-size:13px;color:#ffffff;transform:scaleX(0.9912);">Pending</span>
<span class="t" style="left:218.50px;top:443.00px;font-size:13px;color:#ffffff;transform:scaleX(0.9814);">21</span>
<span class="t" style="left:283.80px;top:443.00px;font-size:13px;color:#ffffff;transform:scaleX(1.0129);">27-May-2022</span>
<span class="t" style="left:373.70px;top:443.00px;font-size:13px;color:#ffffff;transform:scaleX(0.9940);">Dzandu Farms Limited</span>
<span class="t" style="left:586.58px;top:443.00px;font-size:13px;color:#ffffff;transform:scaleX(0.9777);">32.86</span>
<span class="t" style="left:677.00px;top:443.00px;font-size:13px;color:#ffffff;transform:scaleX(1.0069);">Booked</span>
<span class="t" style="left:218.50px;top:469.00px;font-size:13px;color:#ffffff;transform:scaleX(0.9814);">22</span>
<span class="t" style="left:283.80px;top:469.00px;font-size:13px;color:#ffffff;transform:scaleX(1.0129);">27-May-2022</span>
<span class="t" style="left:373.70px;top:469.00px;font-size:13px;color:#ffffff;transform:scaleX(0.9940);">Dzandu Farms Limited</span>
<span class="t" style="left:586.58px;top:469.00px;font-size:13px;color:#ffffff;transform:scaleX(0.9777);">19.72</span>
<span class="t" style="left:677.00px;top:469.00px;font-size:13px;color:#ffffff;transform:scaleX(0.9912);">Pending</span>
<span class="t" style="left:218.50px;top:495.00px;font-size:13px;color:#ffffff;transform:scaleX(0.9814);">23</span>
<span class="t" style="left:283.80px;top:495.00px;font-size:13px;color:#ffffff;transform:scaleX(0.9817);">09-Jul-2022</span>
<span class="t" style="left:373.70px;top:495.00px;font-size:13px;color:#ffffff;transform:scaleX(0.9940);">Dzandu Farms Limited</span>
<span class="t" style="left:569.76px;top:495.00px;font-size:13px;color:#ffffff;transform:scaleX(0.9611);">1,001.00</span>
<span class="t" style="left:677.00px;top:495.00px;font-size:13px;color:#ffffff;transform:scaleX(1.0069);">Booked</span>
<span class="t" style="left:218.50px;top:521.00px;font-size:13px;color:#ffffff;transform:scaleX(0.9814);">24</span>
<span class="t" style="left:283.80px;top:521.00px;font-size:13px;color:#ffffff;transform:scaleX(0.9955);">11-Jul-2022</span>
<span class="t" style="left:373.70px;top:521.00px;font-size:13px;color:#ffffff;transform:scaleX(1.0298);">Goldcoast Matcom</span>
<span class="t" style="left:562.76px;top:521.00px;font-size:13px;color:#ffffff;transform:scaleX(0.9619);">59,904.00</span>
<span class="t" style="left:677.00px;top:521.00px;font-size:13px;color:#ffffff;transform:scaleX(1.0069);">Booked</span>
<span class="t" style="left:218.50px;top:547.00px;font-size:13px;color:#ffffff;transform:scaleX(0.9814);">25</span>
<span class="t" style="left:283.80px;top:547.00px;font-size:13px;color:#ffffff;transform:scaleX(0.9817);">13-Jul-2022</span>
<span class="t" style="left:373.70px;top:547.00px;font-size:13px;color:#ffffff;transform:scaleX(0.9940);">Dzandu Farms Limited</span>
<span class="t" style="left:579.58px;top:547.00px;font-size:13px;color:#ffffff;transform:scaleX(0.9762);">218.40</span>
<span class="t" style="left:677.00px;top:547.00px;font-size:13px;color:#ffffff;transform:scaleX(1.0069);">Booked</span>
<span class="t" style="left:218.50px;top:573.00px;font-size:13px;color:#ffffff;transform:scaleX(0.9814);">26</span>
<span class="t" style="left:283.80px;top:573.00px;font-size:13px;color:#ffffff;transform:scaleX(0.9817);">13-Jul-2022</span>
<span class="t" style="left:373.70px;top:573.00px;font-size:13px;color:#ffffff;transform:scaleX(0.9940);">Dzandu Farms Limited</span>
<span class="t" style="left:569.76px;top:573.00px;font-size:13px;color:#ffffff;transform:scaleX(0.9611);">3,207.50</span>
<span class="t" style="left:677.00px;top:573.00px;font-size:13px;color:#ffffff;transform:scaleX(1.0069);">Booked</span>
<span class="t" style="left:761.30px;top:158.80px;font-size:21.5px;color:#ffffff;transform:scaleX(0.9820);">Goldcoast Matcom</span>
<span class="t" style="left:763.30px;top:189.84px;font-size:12px;color:#ffffff;transform:scaleX(0.9712);">431 Alhaji Unus Rd, Industrial Area, Accra. Ghana</span>
<span class="t" style="left:761.80px;top:237.50px;font-size:13px;color:#ffffff;transform:scaleX(0.9702);">Reference:</span>
<span class="t" style="left:1215.00px;top:157.00px;font-size:13px;color:#ffffff;transform:scaleX(0.9444);">ID:</span>
<span class="t" style="left:1278.10px;top:156.00px;font-size:13px;color:#ffffff;transform:scaleX(0.9952);">14</span>
<span class="t" style="left:1215.00px;top:183.70px;font-size:13px;color:#ffffff;transform:scaleX(0.9814);">Date:</span>
<span class="t" style="left:1278.10px;top:182.70px;font-size:13px;color:#ffffff;transform:scaleX(0.9726);">07-Jan-2022</span>
<span class="t" style="left:1215.00px;top:210.30px;font-size:13px;color:#ffffff;transform:scaleX(0.9514);">Status:</span>
<span class="t" style="left:1278.10px;top:209.50px;font-size:13px;color:#ffffff;transform:scaleX(1.0137);">Booked</span>
<span class="t" style="left:1215.00px;top:237.60px;font-size:13px;color:#ffffff;transform:scaleX(0.9577);">Payment:</span>
<span class="t" style="left:1278.10px;top:237.20px;font-size:13px;color:#ffffff;transform:scaleX(1.0193);">Unpaid</span>
<span class="t" style="left:758.20px;top:273.15px;font-size:14px;color:#ffffff;transform:scaleX(0.9880);">Product Description</span>
<span class="t" style="left:954.70px;top:272.79px;font-size:15.6px;color:#ffffff;transform:scaleX(0.9541);">Stock Location</span>
<span class="t" style="left:1075.00px;top:273.15px;font-size:14px;color:#ffffff;transform:scaleX(1.0359);">Unit</span>
<span class="t" style="left:1147.90px;top:273.15px;font-size:14px;color:#ffffff;transform:scaleX(1.0108);">Unit Cost</span>
<span class="t" style="left:1242.80px;top:273.15px;font-size:14px;color:#ffffff;transform:scaleX(1.0743);">Qty</span>
<span class="t" style="left:1301.00px;top:273.15px;font-size:14px;color:#ffffff;transform:scaleX(1.0383);">Amount</span>
<span class="t" style="left:754.70px;top:301.00px;font-size:13px;color:#ffffff;transform:scaleX(0.9986);">Digestive All-wheat Biscuit 400g</span>
<span class="t" style="left:952.60px;top:301.00px;font-size:13px;color:#ffffff;transform:scaleX(0.9879);">Warehouse</span>
<span class="t" style="left:1072.00px;top:301.00px;font-size:13px;color:#ffffff;transform:scaleX(0.9715);">each</span>
<span class="t" style="left:1184.20px;top:301.00px;font-size:13px;color:#ffffff;transform:scaleX(0.9481);">3.52</span>
<span class="t" style="left:1230.70px;top:301.00px;font-size:13px;color:#ffffff;transform:scaleX(0.9455);">152.00</span>
<span class="t" style="left:1315.20px;top:301.00px;font-size:13px;color:#ffffff;transform:scaleX(0.9606);">535.04</span>
<span class="t" style="left:755.70px;top:548.00px;font-size:13px;color:#ffffff;transform:scaleX(1.0570);">Memo:</span>
<span class="t" style="left:1168.90px;top:550.20px;font-size:13px;color:#ffffff;transform:scaleX(1.0072);">Subtotal:</span>
<span class="t" style="left:1316.10px;top:548.00px;font-size:13px;color:#ffffff;transform:scaleX(0.9606);">535.04</span>
<span class="t" style="left:1168.90px;top:575.20px;font-size:13px;color:#ffffff;transform:scaleX(0.9447);">Taxes:</span>
<span class="t" style="left:1330.00px;top:573.00px;font-size:13px;color:#ffffff;transform:scaleX(0.9600);">0.00</span>
<span class="t" style="left:1168.90px;top:599.70px;font-size:13px;color:#ffffff;transform:scaleX(1.0136);">Total:</span>
<span class="t" style="left:1315.00px;top:598.00px;font-size:13px;color:#ffffff;font-weight:bold;transform:scaleX(0.9883);">535.04</span>
<span class="t" style="left:774.00px;top:658.00px;font-size:13px;color:#ffffff;transform:scaleX(1.0390);">Re-order</span>
<span class="t" style="left:884.70px;top:658.00px;font-size:13px;color:#ffffff;transform:scaleX(0.9283);">Pay</span>
<span class="t" style="left:1105.10px;top:658.00px;font-size:13px;color:#ffffff;transform:scaleX(1.0390);">Void</span>
<span class="t" style="left:1200.10px;top:658.00px;font-size:13px;color:#ffffff;transform:scaleX(0.9731);">View</span>
<span class="t" style="left:1293.00px;top:658.00px;font-size:13px;color:#2c2a2e;transform:scaleX(0.9953);">Book</span>
</body></html>
